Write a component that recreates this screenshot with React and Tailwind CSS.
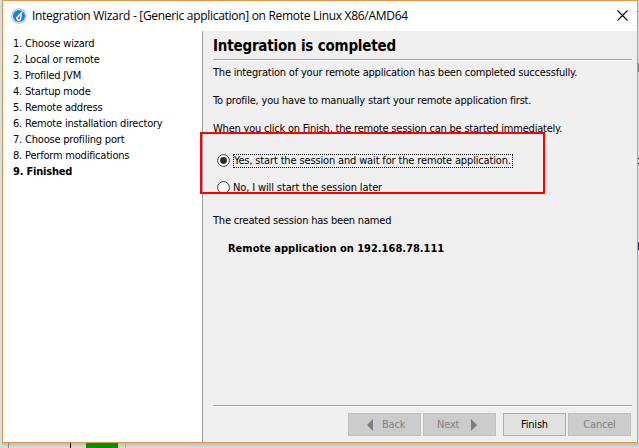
const steps = [
  'Choose wizard',
  'Local or remote',
  'Profiled JVM',
  'Startup mode',
  'Remote address',
  'Remote installation directory',
  'Choose profiling port',
  'Perform modifications',
];

function AppIcon() {
  return (
    <svg width="16" height="16" viewBox="0 0 16 16" className="block shrink-0">
      <circle cx="8" cy="8" r="7.8" fill="#b4b8bd" />
      <circle cx="8" cy="8" r="7.1" fill="#dfe4e9" />
      <circle cx="8" cy="8" r="6.1" fill="#1683e0" />
      <path d="M11.6 2.6 L10.4 10.2 A2.6 2.6 0 1 1 6 8.4 Z" fill="#fff" />
      <path d="M9.6 6.6 L9 10.2 A1.1 1.1 0 1 1 7.2 9.4 Z" fill="#e2553a" />
    </svg>
  );
}

function Separator() {
  return <div className="h-[2px] shrink-0 border-b border-white bg-[#a0a0a0]" />;
}

function Radio({ checked }) {
  return (
    <svg width="13" height="13" viewBox="0 0 13 13" className="block shrink-0">
      <circle cx="6.5" cy="6.5" r="5.9" fill="#fff" stroke="#333" strokeWidth="1" />
      {checked && <circle cx="6.5" cy="6.5" r="3.4" fill="#2b2b2b" />}
    </svg>
  );
}

const disabled = 'border-[#bfbfbf] bg-[#cccccc] text-[#838383]';

export default function App() {
  return (
    <div className="relative h-[448px] w-[639px] overflow-hidden bg-[#dcdcdc] pl-[2px] font-['DejaVu_Sans_Condensed','DejaVu_Sans',sans-serif] text-[11px] tracking-[-0.2px] text-black [font-stretch:condensed]">
      <div className="flex h-[443px] w-[636px] flex-col border border-[#d99a4e] bg-white whitespace-nowrap">
        <header className="flex h-[30px] shrink-0 items-center pl-2 pr-[9px] font-['Open_Sans',sans-serif] text-[12px] [font-stretch:normal]">
          <AppIcon />
          <span className="ml-[5px] flex-1 tracking-[-0.3px]">Integration Wizard - [Generic application] on Remote Linux X86/AMD64</span>
          <svg width="11" height="11" viewBox="0 0 11 11" className="mt-[-1px] block">
            <path d="M0.5 0.5 L10.5 10.5 M10.5 0.5 L0.5 10.5" stroke="#000" strokeWidth="1.1" />
          </svg>
        </header>
        <div className="flex min-h-0 flex-1">
          <nav className="w-[200px] shrink-0 border-r border-[#a0a0a0] pl-[10px] pt-[5px] leading-4">
            {steps.map((s, i) => (
              <div key={s}>{i + 1}. {s}</div>
            ))}
            <div className="font-bold">9. Finished</div>
          </nav>
          <main className="flex flex-1 flex-col bg-[#efefef] pl-[10px] pr-[5px]">
            <h1 className="h-[28px] shrink-0 text-[15px] leading-[30px] font-bold">Integration is completed</h1>
            <Separator />
            <p className="mt-1 leading-4">The integration of your remote application has been completed successfully.</p>
            <p className="mt-3 leading-4">To profile, you have to manually start your remote application first.</p>
            <p className="mt-3 leading-4 tracking-[-0.21px]">When you click on Finish, the remote session can be started immediately.</p>
            <div className="mt-[17px] flex h-[14px] items-start gap-[3px] pl-1">
              <Radio checked />
              <span className="h-[14px] w-[280px] border border-dotted border-black leading-[12px] tracking-[-0.15px]">Yes, start the session and wait for the remote application.</span>
            </div>
            <div className="mt-[13px] flex h-[14px] items-start gap-[3px] pl-1 leading-[14px]">
              <Radio />
              <span className="tracking-[-0.13px]">No, I will start the session later</span>
            </div>
            <p className="mt-[18px] leading-4">The created session has been named</p>
            <p className="mt-3 pl-[15px] leading-4 font-bold tracking-normal">Remote application on 192.168.78.111</p>
            <div className="flex-1" />
            <Separator />
            <footer className="mt-[6px] mb-[6px] flex h-[23px] shrink-0 justify-end pr-[1px] leading-[21px]">
              <div className={'flex w-[73px] border pl-[18px] ' + disabled}>
                <svg width="6" height="12" className="mt-[5px] block"><path d="M6 0V12L0 6Z" fill="#7d7d7d" /></svg>
                <span className="ml-[9px]">Back</span>
              </div>
              <div className={'ml-[2px] flex w-[73px] border pl-[13px] ' + disabled}>
                <span>Next</span>
                <svg width="6" height="12" className="mt-[5px] mr-[18px] ml-auto block"><path d="M0 0V12L6 6Z" fill="#7d7d7d" /></svg>
              </div>
              <div className="ml-[7px] w-[63px] border border-[#adadad] bg-[#e1e1e1] text-center">Finish</div>
              <div className={'ml-[2px] w-[63px] border text-center ' + disabled}>Cancel</div>
            </footer>
          </main>
        </div>
      </div>
      <div className="flex h-[5px] bg-gradient-to-b from-[#bdbdbd] to-[#dedede]">
        <div className="ml-[6px] w-px bg-[#888]" />
        <div className="ml-[61px] w-px bg-black" />
        <div className="ml-[15px] w-8 bg-[#009200]" />
        <div className="ml-[7px] w-px bg-[#aaa]" />
      </div>
      <div className="absolute top-[132px] left-[200px] h-[62px] w-[345px] border-2 border-[#ff0000]" />
      <div className="absolute top-0 right-0 flex w-px flex-col">
        <div className="mt-[11px] h-px bg-[#888]" />
        <div className="mt-[51px] h-[9px] bg-[#777]" />
        <div className="mt-[86px] h-px bg-black" />
        <div className="mt-[4px] h-px bg-black" />
        <div className="mt-[78px] h-[8px] bg-[#3a2f80]" />
      </div>
    </div>
  );
}
